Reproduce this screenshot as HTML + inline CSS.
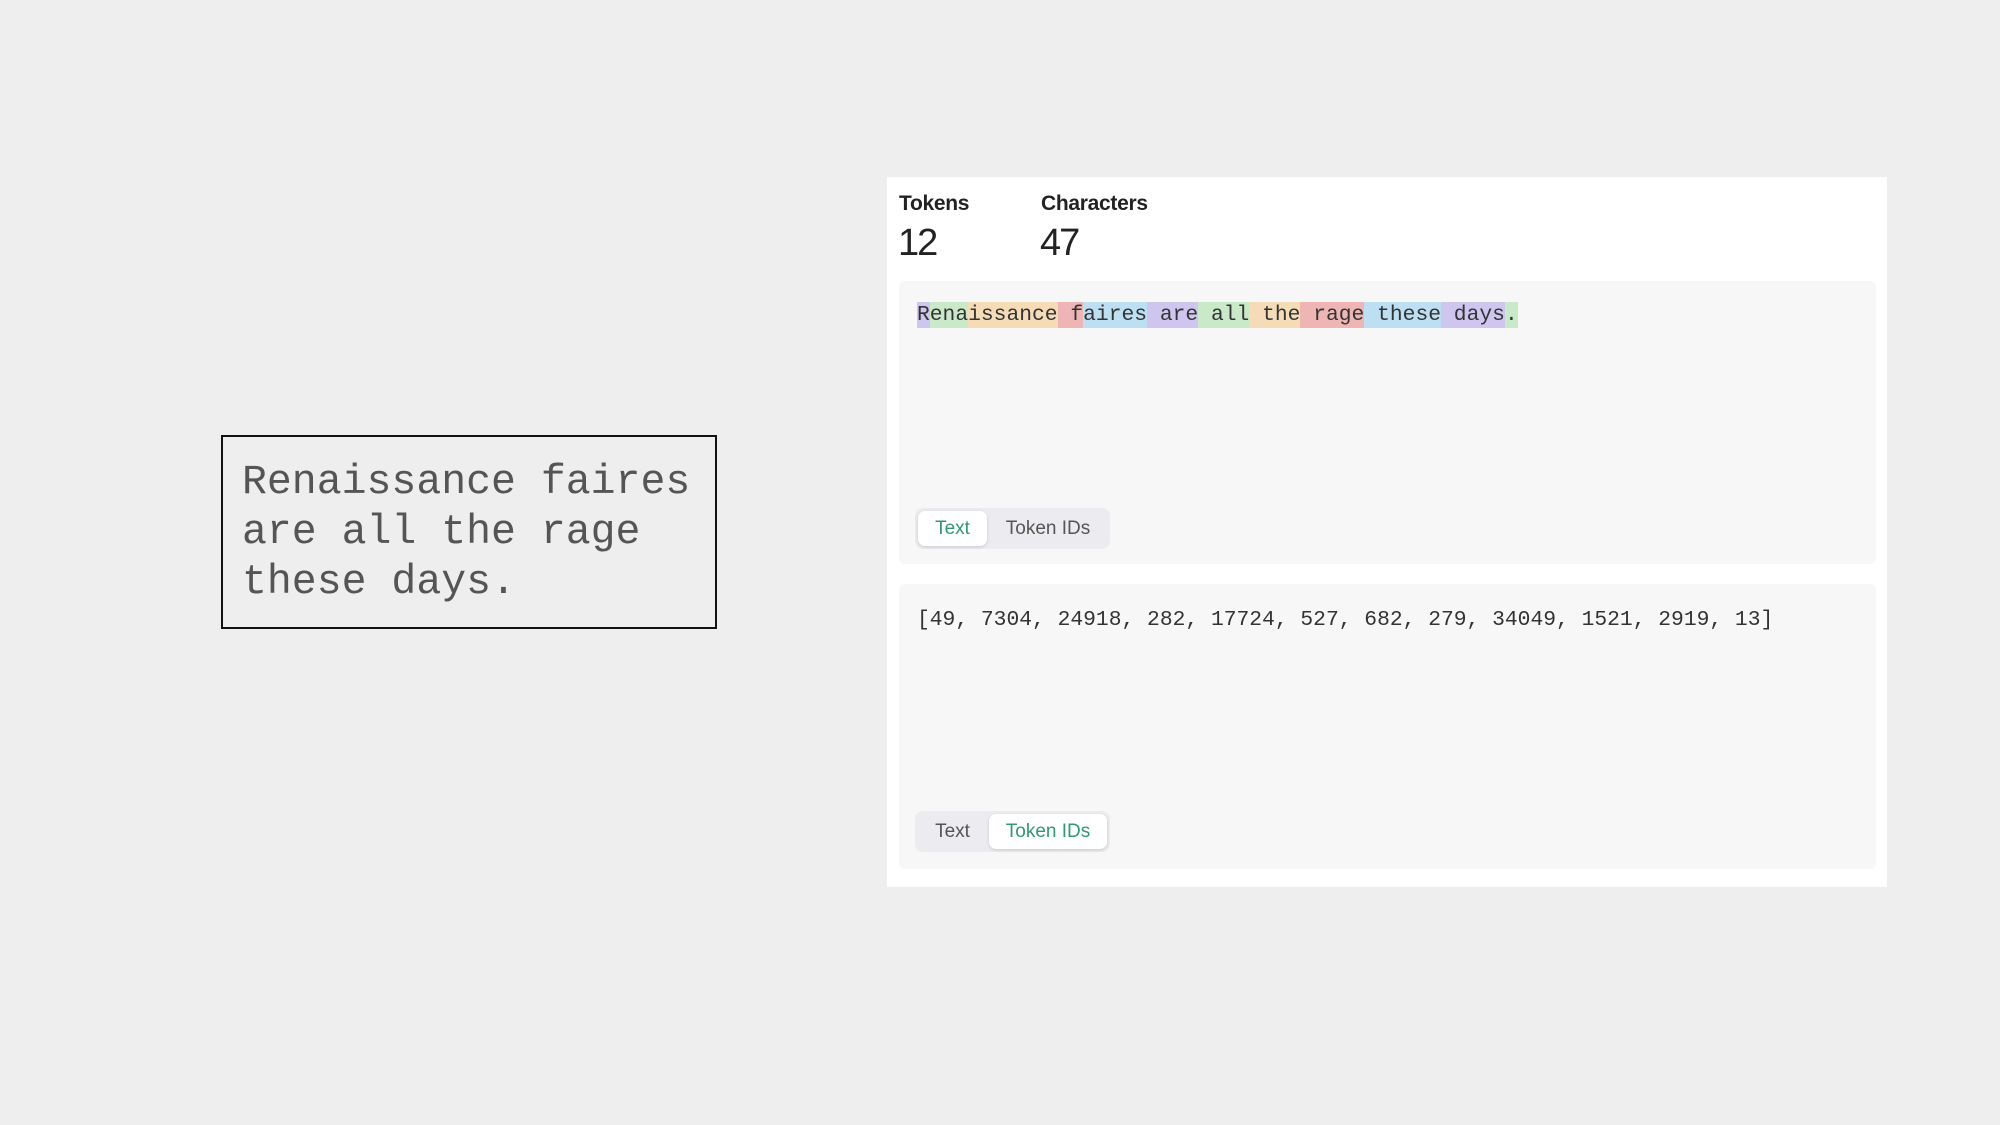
<!DOCTYPE html>
<html><head><style>
body{margin:0;width:2000px;height:1125px;background:#eeeeee;position:relative;font-family:"Liberation Sans",sans-serif;overflow:hidden}
.lbox{position:absolute;left:221px;top:435px;width:492px;height:190px;border:2px solid #111;box-sizing:content-box}
.lbox div{position:absolute;left:19px;top:21px;font-family:"Liberation Mono",monospace;font-size:41.5px;line-height:50px;color:#555;white-space:pre}
.panel{position:absolute;left:887px;top:177px;width:1000px;height:710px;background:#fff}
.lab{position:absolute;top:192px;font-size:21px;font-weight:bold;color:#222;letter-spacing:-0.3px}
.num{position:absolute;top:222px;font-size:38px;color:#222;letter-spacing:-2px}
.box{position:absolute;left:899px;width:977px;background:#f7f7f7;border-radius:6px}
.tok{position:absolute;left:917px;top:302px;font-family:"Liberation Mono",monospace;font-size:21.3px;line-height:26px;color:#333;white-space:pre}
.tok span{display:inline-block;height:26px}
.p{background:#cfc6ef}.g{background:#c9e9c9}.o{background:#f5dcb6}.r{background:#efb5b5}.b{background:#bcdff2}
.ids{position:absolute;left:917px;top:608px;font-family:"Liberation Mono",monospace;font-size:21.3px;color:#333;white-space:pre}
.tg{position:absolute;left:915px;width:195px;height:41px;background:#ececf0;border-radius:8px}
.tg span{position:absolute;top:3px;height:35px;line-height:35px;font-size:19px;color:#555;text-align:center}
.tg span.on{background:#fff;color:#2e9a72;border-radius:7px;box-shadow:0 1px 3px rgba(0,0,0,.15)}
</style></head><body>
<div class="lbox"><div>Renaissance faires
are all the rage
these days.</div></div>
<div class="panel"></div>
<div class="lab" style="left:899px">Tokens</div>
<div class="lab" style="left:1041px">Characters</div>
<div class="num" style="left:898px">12</div>
<div class="num" style="left:1040px">47</div>
<div class="box" style="top:281px;height:283px"></div>
<div class="tok"><span class="p">R</span><span class="g">ena</span><span class="o">issance</span><span class="r"> f</span><span class="b">aires</span><span class="p"> are</span><span class="g"> all</span><span class="o"> the</span><span class="r"> rage</span><span class="b"> these</span><span class="p"> days</span><span class="g">.</span></div>
<div class="tg" style="top:508px"><span class="on" style="left:3px;width:69px">Text</span><span style="left:74px;width:118px">Token IDs</span></div>
<div class="box" style="top:584px;height:285px"></div>
<div class="ids">[49, 7304, 24918, 282, 17724, 527, 682, 279, 34049, 1521, 2919, 13]</div>
<div class="tg" style="top:811px"><span style="left:3px;width:69px">Text</span><span class="on" style="left:74px;width:118px">Token IDs</span></div>
</body></html>
